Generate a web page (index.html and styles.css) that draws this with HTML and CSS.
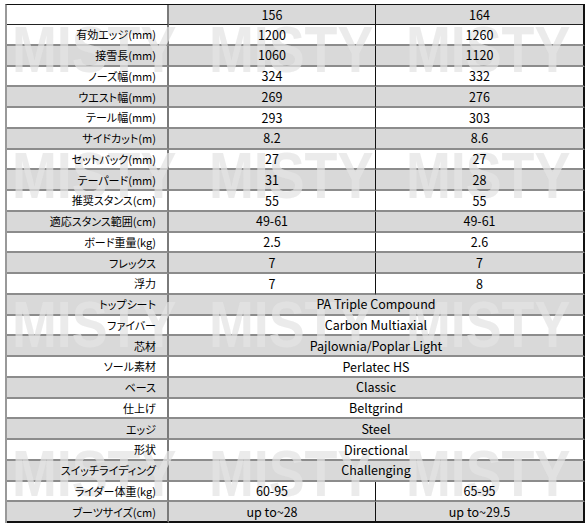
FILE: index.html
```html
<!DOCTYPE html>
<html lang="ja">
<head>
<meta charset="utf-8">
<title>Spec</title>
<link rel="stylesheet" href="styles.css">
</head>
<body>
<div class="sheet">
  <div class="spec">
    <div class="row head"><div class="c lab"><span class="t"></span></div><div class="c v g"><span class="t">156</span></div><div class="c v g last"><span class="t">164</span></div></div>
    <div class="row"><div class="c lab"><span class="t">有効エッジ(mm)</span></div><div class="c v"><span class="t">1200</span></div><div class="c v last"><span class="t">1260</span></div></div>
    <div class="row gr"><div class="c lab"><span class="t">接雪長(mm)</span></div><div class="c v"><span class="t">1060</span></div><div class="c v last"><span class="t">1120</span></div></div>
    <div class="row"><div class="c lab"><span class="t">ノーズ幅(mm)</span></div><div class="c v"><span class="t">324</span></div><div class="c v last"><span class="t">332</span></div></div>
    <div class="row gr"><div class="c lab"><span class="t">ウエスト幅(mm)</span></div><div class="c v"><span class="t">269</span></div><div class="c v last"><span class="t">276</span></div></div>
    <div class="row"><div class="c lab"><span class="t">テール幅(mm)</span></div><div class="c v"><span class="t">293</span></div><div class="c v last"><span class="t">303</span></div></div>
    <div class="row gr"><div class="c lab"><span class="t">サイドカット(m)</span></div><div class="c v"><span class="t">8.2</span></div><div class="c v last"><span class="t">8.6</span></div></div>
    <div class="row"><div class="c lab"><span class="t">セットバック(mm)</span></div><div class="c v"><span class="t">27</span></div><div class="c v last"><span class="t">27</span></div></div>
    <div class="row gr"><div class="c lab"><span class="t">テーパード(mm)</span></div><div class="c v"><span class="t">31</span></div><div class="c v last"><span class="t">28</span></div></div>
    <div class="row"><div class="c lab"><span class="t">推奨スタンス(cm)</span></div><div class="c v"><span class="t">55</span></div><div class="c v last"><span class="t">55</span></div></div>
    <div class="row gr"><div class="c lab"><span class="t">適応スタンス範囲(cm)</span></div><div class="c v"><span class="t">49-61</span></div><div class="c v last"><span class="t">49-61</span></div></div>
    <div class="row"><div class="c lab"><span class="t">ボード重量(kg)</span></div><div class="c v"><span class="t">2.5</span></div><div class="c v last"><span class="t">2.6</span></div></div>
    <div class="row gr"><div class="c lab"><span class="t">フレックス</span></div><div class="c v"><span class="t">7</span></div><div class="c v last"><span class="t">7</span></div></div>
    <div class="row"><div class="c lab"><span class="t">浮力</span></div><div class="c v"><span class="t">7</span></div><div class="c v last"><span class="t">8</span></div></div>
    <div class="row gr"><div class="c lab"><span class="t">トップシート</span></div><div class="c v span2 last"><span class="t">PA Triple Compound</span></div></div>
    <div class="row"><div class="c lab"><span class="t">ファイバー</span></div><div class="c v span2 last"><span class="t">Carbon Multiaxial</span></div></div>
    <div class="row gr"><div class="c lab"><span class="t">芯材</span></div><div class="c v span2 last"><span class="t">Pajlownia/Poplar Light</span></div></div>
    <div class="row"><div class="c lab"><span class="t">ソール素材</span></div><div class="c v span2 last"><span class="t">Perlatec HS</span></div></div>
    <div class="row gr"><div class="c lab"><span class="t">ベース</span></div><div class="c v span2 last"><span class="t">Classic</span></div></div>
    <div class="row"><div class="c lab"><span class="t">仕上げ</span></div><div class="c v span2 last"><span class="t">Beltgrind</span></div></div>
    <div class="row gr"><div class="c lab"><span class="t">エッジ</span></div><div class="c v span2 last"><span class="t">Steel</span></div></div>
    <div class="row"><div class="c lab"><span class="t">形状</span></div><div class="c v span2 last"><span class="t">Directional</span></div></div>
    <div class="row gr"><div class="c lab"><span class="t">スイッチライディング</span></div><div class="c v span2 last"><span class="t">Challenging</span></div></div>
    <div class="row"><div class="c lab"><span class="t">ライダー体重(kg)</span></div><div class="c v"><span class="t">60-95</span></div><div class="c v last"><span class="t">65-95</span></div></div>
    <div class="row gr end"><div class="c lab"><span class="t">ブーツサイズ(cm)</span></div><div class="c v"><span class="t">up to~28</span></div><div class="c v last"><span class="t">up to~29.5</span></div></div>
  </div>
  <div class="mark" aria-hidden="true">
    <span class="w b1 x1">MISTY</span><span class="w b1 x2">MISTY</span><span class="w b1 x3">MISTY</span>
    <span class="w b2 x1">MISTY</span><span class="w b2 x2">MISTY</span><span class="w b2 x3">MISTY</span>
    <span class="w b3 x1">MISTY</span><span class="w b3 x2">MISTY</span><span class="w b3 x3">MISTY</span>
    <span class="w b4 x1">MISTY</span><span class="w b4 x2">MISTY</span><span class="w b4 x3">MISTY</span>
  </div>
</div>
</body>
</html>
```
FILE: styles.css
```css
html, body {
  margin: 0;
  padding: 0;
  background: #fff;
}

.sheet {
  position: relative;
  z-index: 0;
  width: 580px;
  margin: 4px 0 0 5px;
  font-family: "Noto Sans CJK JP", "Noto Sans", sans-serif;
  color: #000;
}

.spec {
  display: grid;
  grid-template-columns: 162px 207px 209px;
  grid-template-rows: 20px;
  grid-auto-rows: 20.75px;
  border-top: 1px solid #111;
  border-left: 2px solid #999;
}

.row {
  display: contents;
}

.c {
  box-sizing: border-box;
  display: flex;
  align-items: center;
  border-bottom: 2px solid #8c8c8c;
  border-right: 1.5px solid #111;
  background: #fff;
  line-height: 1;
  white-space: nowrap;
  padding-top: 1px;
}

.row.gr .c,
.c.g {
  background: #d9d9d9;
}

.head .c {
  border-bottom: 1.5px solid #222;
}

.end .c {
  border-bottom: 2px solid #111;
}

.lab {
  justify-content: flex-end;
  padding-right: 11px;
  font-size: 11px;
  font-feature-settings: "palt" 1;
  border-right: 2px solid #7a7a7a;
}

.v {
  justify-content: center;
  font-size: 12.5px;
}

.last {
  border-right: 2px solid #111;
}

.span2 {
  grid-column: span 2;
}

.t {
  position: relative;
  z-index: 2;
}

.mark {
  position: absolute;
  inset: 0;
  z-index: 1;
  overflow: hidden;
  pointer-events: none;
}

.w {
  position: absolute;
  font-family: "Liberation Sans", Arial, sans-serif;
  font-weight: bold;
  font-size: 65.6px;
  line-height: 1;
  color: rgba(227, 227, 227, 0.72);
  transform: scaleX(0.82);
  transform-origin: left top;
}

.b1 { top: 12.5px; }
.b2 { top: 138.5px; }
.b3 { top: 287.5px; }
.b4 { top: 436.5px; }

.x1 { left: 7px; }
.x2 { left: 204px; }
.x3 { left: 401px; }
```
